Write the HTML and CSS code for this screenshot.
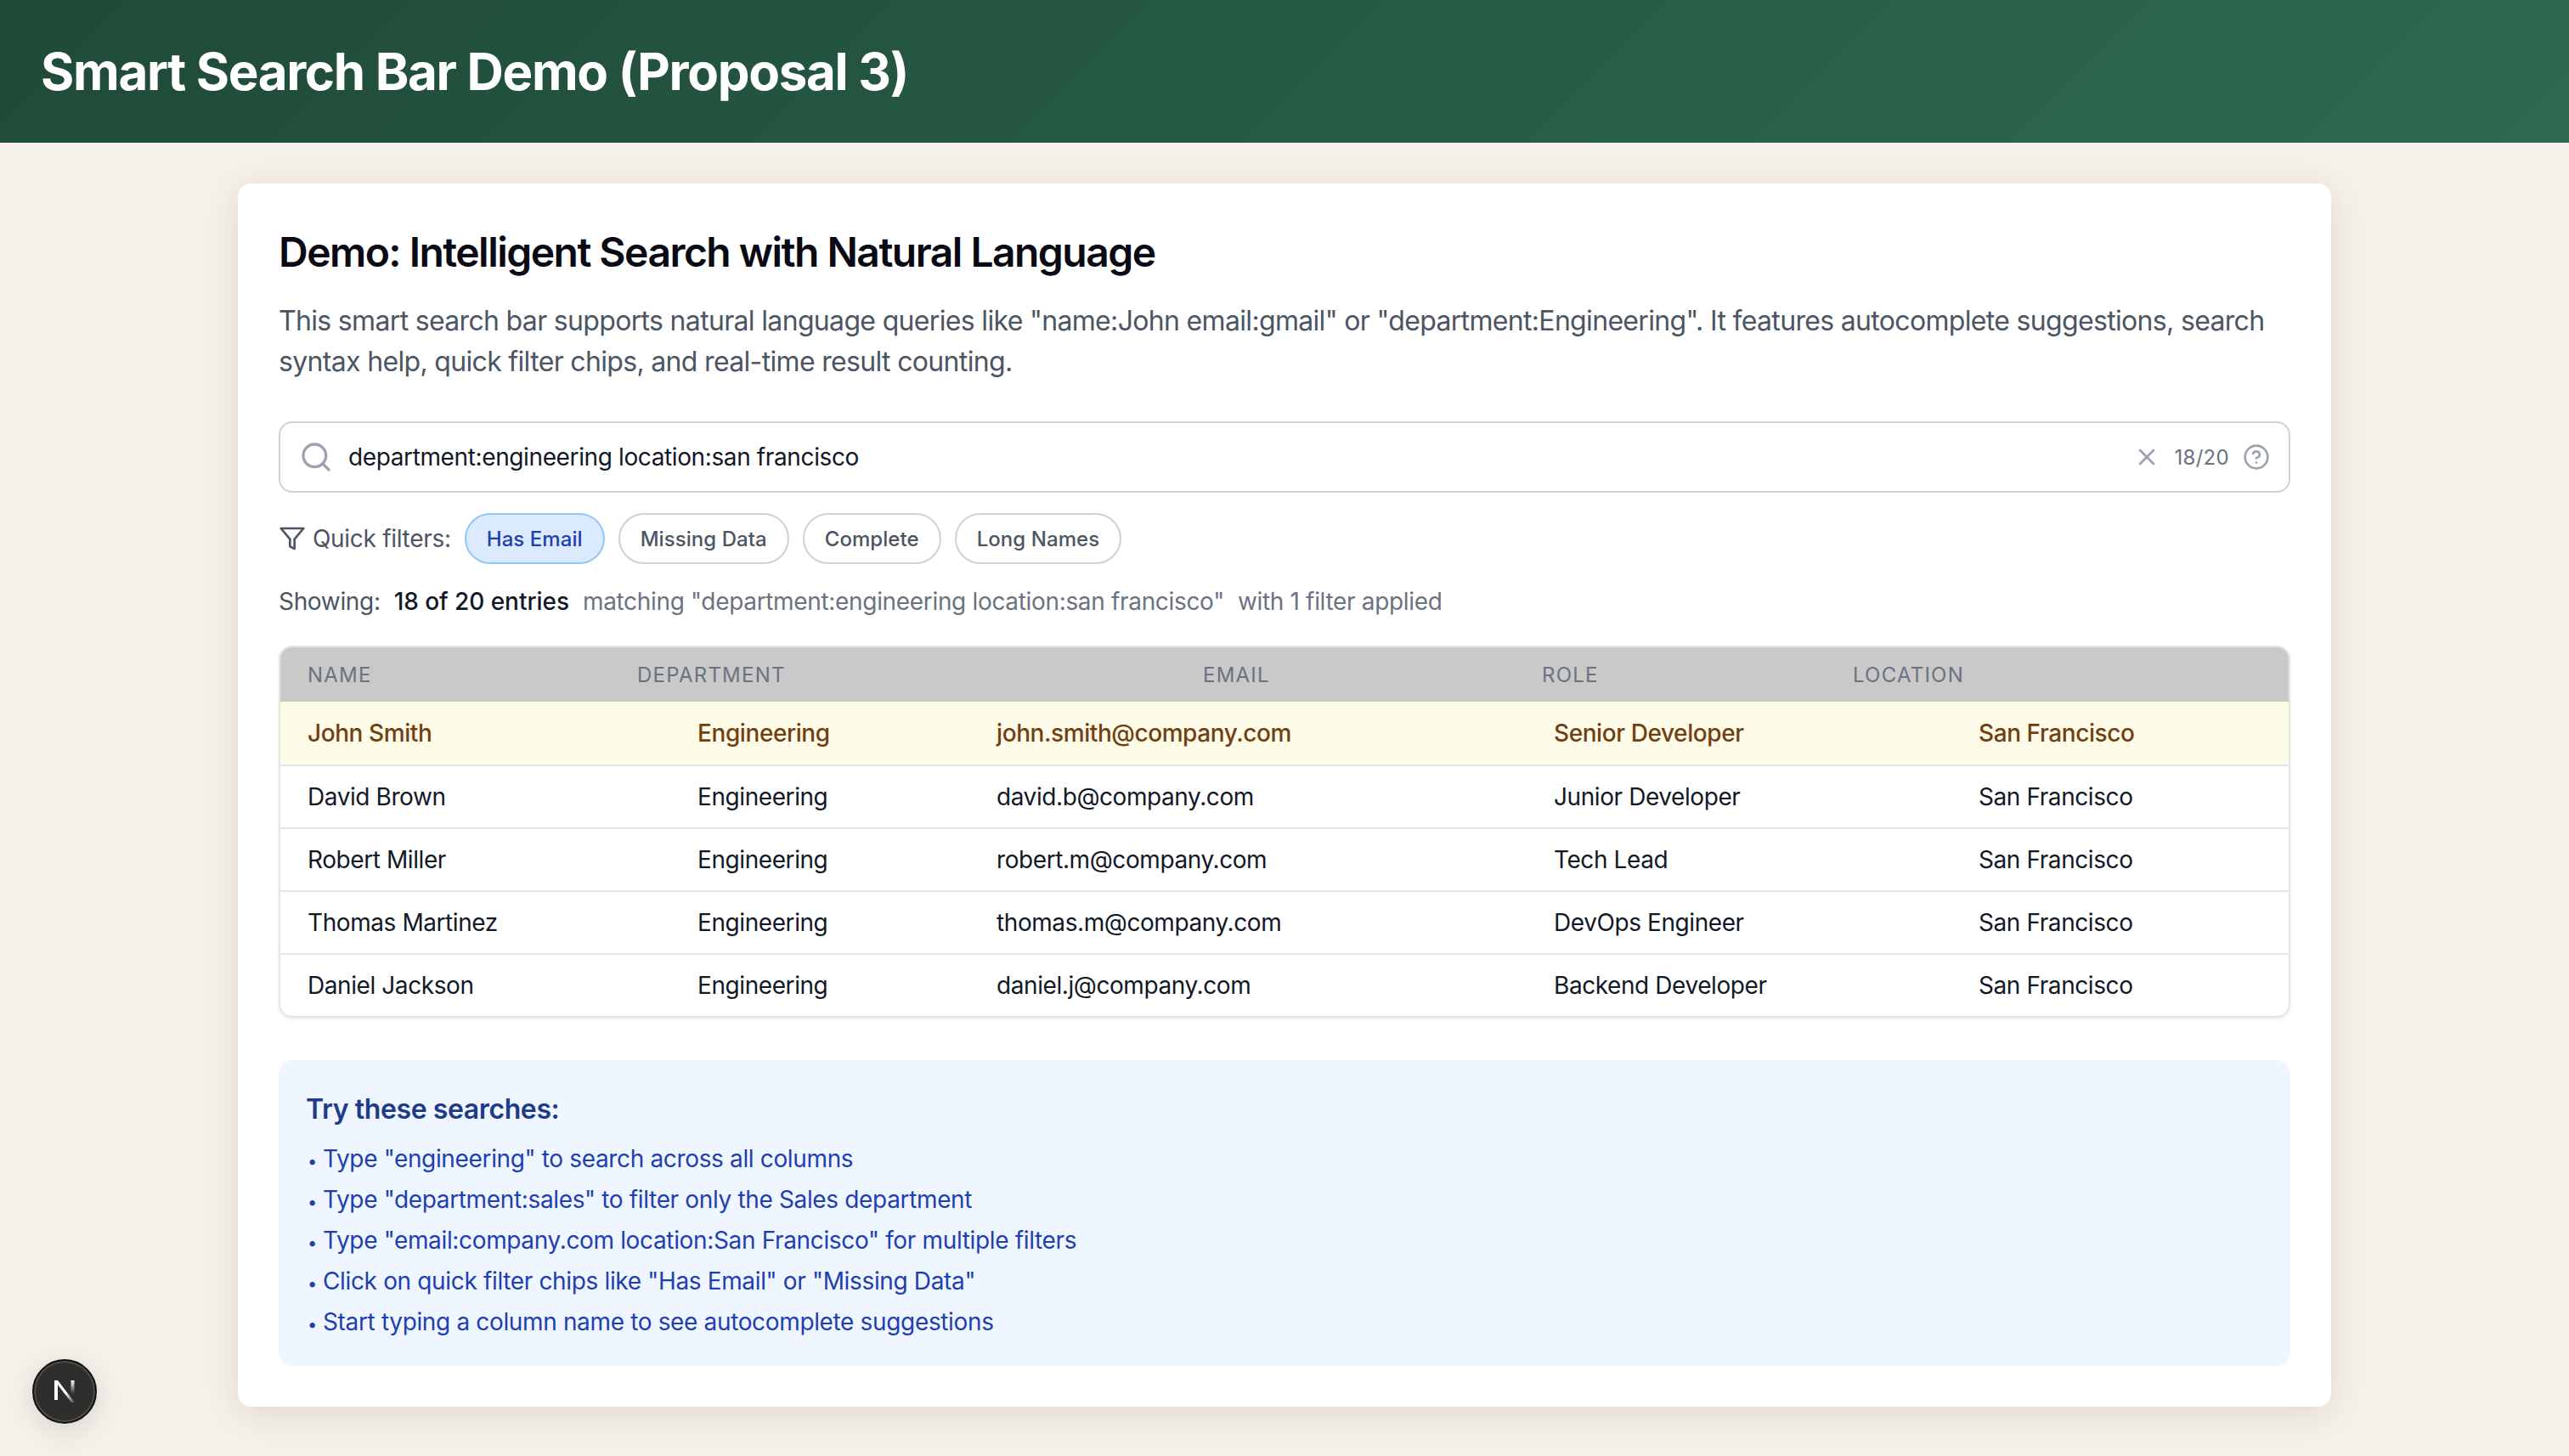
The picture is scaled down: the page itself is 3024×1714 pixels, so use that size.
FILE: index.html
```html
<!DOCTYPE html>
<html lang="en">
<head>
<meta charset="UTF-8">
<title>Smart Search Bar Demo (Proposal 3)</title>
<link rel="stylesheet" href="styles.css">
</head>
<body>

<header class="topbar">
  <h1>Smart Search Bar Demo (Proposal 3)</h1>
</header>

<main class="page">
  <section class="card">
    <h2>Demo: Intelligent Search with Natural Language</h2>
    <p class="intro">This smart search bar supports natural language queries like "name:John email:gmail" or "department:Engineering". It features autocomplete suggestions, search syntax help, quick filter chips, and real-time result counting.</p>

    <div class="search">
      <svg class="icon-search" viewBox="0 0 24 24" fill="none" stroke="currentColor" stroke-width="2" stroke-linecap="round" stroke-linejoin="round"><circle cx="11" cy="11" r="8"/><path d="m21 21-4.3-4.3"/></svg>
      <span class="search-text">department:engineering location:san francisco</span>
      <svg class="icon-clear" viewBox="0 0 24 24" fill="none" stroke="currentColor" stroke-width="2" stroke-linecap="round" stroke-linejoin="round"><path d="M18 6 6 18"/><path d="m6 6 12 12"/></svg>
      <span class="search-count">18/20</span>
      <svg class="icon-help" viewBox="0 0 24 24" fill="none" stroke="currentColor" stroke-width="2" stroke-linecap="round" stroke-linejoin="round"><circle cx="12" cy="12" r="10"/><path d="M9.09 9a3 3 0 0 1 5.83 1c0 2-3 3-3 3"/><path d="M12 17h.01"/></svg>
    </div>

    <div class="filters">
      <svg class="icon-filter" viewBox="0 0 24 24" fill="none" stroke="currentColor" stroke-width="2" stroke-linecap="round" stroke-linejoin="round"><polygon points="22 3 2 3 10 12.46 10 19 14 21 14 12.46 22 3"/></svg>
      <span class="filters-label">Quick filters:</span>
      <span class="chip active">Has Email</span>
      <span class="chip">Missing Data</span>
      <span class="chip">Complete</span>
      <span class="chip">Long Names</span>
    </div>

    <p class="summary">
      <span>Showing:</span>
      <strong>18 of 20 entries</strong>
      <span class="muted">matching "department:engineering location:san francisco"</span>
      <span class="muted">with 1 filter applied</span>
    </p>

    <div class="table">
      <div class="thead">
        <span>Name</span><span>Department</span><span>Email</span><span>Role</span><span>Location</span>
      </div>
      <div class="row highlight">
        <span>John Smith</span><span>Engineering</span><span>john.smith@company.com</span><span>Senior Developer</span><span>San Francisco</span>
      </div>
      <div class="row">
        <span>David Brown</span><span>Engineering</span><span>david.b@company.com</span><span>Junior Developer</span><span>San Francisco</span>
      </div>
      <div class="row">
        <span>Robert Miller</span><span>Engineering</span><span>robert.m@company.com</span><span>Tech Lead</span><span>San Francisco</span>
      </div>
      <div class="row">
        <span>Thomas Martinez</span><span>Engineering</span><span>thomas.m@company.com</span><span>DevOps Engineer</span><span>San Francisco</span>
      </div>
      <div class="row">
        <span>Daniel Jackson</span><span>Engineering</span><span>daniel.j@company.com</span><span>Backend Developer</span><span>San Francisco</span>
      </div>
    </div>

    <div class="tips">
      <h3>Try these searches:</h3>
      <ul>
        <li><span class="dot">•</span>Type "engineering" to search across all columns</li>
        <li><span class="dot">•</span>Type "department:sales" to filter only the Sales department</li>
        <li><span class="dot">•</span>Type "email:company.com location:San Francisco" for multiple filters</li>
        <li><span class="dot">•</span>Click on quick filter chips like "Has Email" or "Missing Data"</li>
        <li><span class="dot">•</span>Start typing a column name to see autocomplete suggestions</li>
      </ul>
    </div>
  </section>
</main>

<div class="dev-badge">
  <svg viewBox="0 0 24 26" fill="none">
    <defs>
      <linearGradient id="nFade" x1="0" y1="0" x2="0" y2="1">
        <stop offset="0" stop-color="#fff"/>
        <stop offset="1" stop-color="#fff" stop-opacity="0"/>
      </linearGradient>
      <linearGradient id="nDiag" x1="0" y1="0" x2="1" y2="1">
        <stop offset="0.55" stop-color="#fff"/>
        <stop offset="1" stop-color="#fff" stop-opacity="0.1"/>
      </linearGradient>
    </defs>
    <rect x="0" y="0" width="4" height="23" fill="#fff"/>
    <polygon points="0,0 4,0 24,26 20,26" fill="url(#nDiag)"/>
    <rect x="19.5" y="0" width="4" height="16" fill="url(#nFade)"/>
  </svg>
</div>

</body>
</html>
```

FILE: styles.css
```css
* {
  box-sizing: border-box;
}
html, body {
  margin: 0;
  padding: 0;
}
body {
  font-family: Inter, "Liberation Sans", sans-serif;
  background-color: #f5f1ea;
  color: #111827;
  min-height: 1714px;
}

.topbar {
  height: 168px;
  padding: 0 48px;
  display: flex;
  align-items: center;
  background: linear-gradient(135deg, #1f4a38 0%, #2d6a4f 100%);
}
.topbar h1 {
  margin: 0;
  font-size: 60px;
  font-weight: 700;
  line-height: 1;
  letter-spacing: -1.33px;
  color: #fff;
}

.page {
  padding: 48px 280px 58px;
}
.card {
  height: 1440px;
  padding: 48px;
  background-color: #fff;
  border-radius: 16px;
  box-shadow: 0 8px 40px rgba(60, 40, 20, 0.12);
}
.card h2 {
  margin: 0 0 24px;
  font-size: 48px;
  font-weight: 600;
  line-height: 66px;
  letter-spacing: -1.53px;
  color: #0a0a14;
}
.intro {
  margin: 0 0 46px;
  font-size: 32px;
  line-height: 48px;
  letter-spacing: -0.67px;
  color: #4b5563;
}

.search {
  height: 84px;
  padding: 0 24px 0 22px;
  display: flex;
  align-items: center;
  border: 2px solid #d1d1d1;
  border-radius: 16px;
  background-color: #fff;
}
.icon-search {
  width: 40px;
  height: 40px;
  color: #9ca3af;
  margin-right: 18px;
}
.search-text {
  flex: 1;
  font-size: 28px;
  letter-spacing: -0.38px;
  color: #111827;
}
.icon-clear {
  width: 32px;
  height: 32px;
  color: #9ca3af;
  margin-right: 16px;
}
.search-count {
  font-size: 24px;
  letter-spacing: 0.3px;
  color: #6b7280;
  margin-right: 16px;
}
.icon-help {
  width: 32px;
  height: 32px;
  color: #9ca3af;
  margin-right: -2px;
}

.filters {
  margin-top: 24px;
  display: flex;
  align-items: center;
}
.icon-filter {
  width: 32px;
  height: 32px;
  color: #4b5563;
  margin-right: 8px;
}
.filters-label {
  font-size: 28px;
  letter-spacing: -0.3px;
  color: #4b5563;
  margin-right: 16px;
}
.chip {
  height: 60px;
  padding: 0 24px;
  margin-right: 16px;
  display: flex;
  align-items: center;
  border: 2px solid #d1d1d1;
  border-radius: 30px;
  font-size: 24px;
  font-weight: 500;
  letter-spacing: 0.06px;
  color: #4b5563;
  background-color: #fff;
}
.chip.active {
  background-color: #dbeafe;
  border-color: #93c5fd;
  color: #1e40af;
}

.summary {
  margin: 24px 0 32px;
  display: flex;
  gap: 16px;
  font-size: 28px;
  line-height: 40px;
  letter-spacing: -0.33px;
  color: #4b5563;
}
.summary strong {
  font-weight: 500;
  letter-spacing: -0.05px;
  color: #111827;
}
.summary .muted {
  color: #6b7280;
}

.table {
  border: 2px solid #e5e5e5;
  border-radius: 16px;
  overflow: hidden;
  box-shadow: 0 2px 4px rgba(0, 0, 0, 0.08);
}
.thead, .row {
  padding-left: 32px;
  display: grid;
}
.thead {
  height: 64px;
  grid-template-columns: 388px 666px 399px 366px 1fr;
  align-items: center;
  background-color: #c9c9c9;
  font-size: 24px;
  font-weight: 400;
  letter-spacing: 1.22px;
  text-transform: uppercase;
  color: #6b7280;
}
.row {
  height: 74px;
  grid-template-columns: 459px 352px 656px 500px 1fr;
  align-items: center;
  font-size: 28px;
  letter-spacing: -0.42px;
  color: #111827;
  border-top: 2px solid #e5e5e5;
}
.thead + .row {
  border-top: 0;
}
.row.highlight {
  background-color: #fefce8;
  color: #713f12;
  font-weight: 500;
}

.tips {
  margin-top: 50px;
  padding: 32px;
  height: 360px;
  background-color: #eff6ff;
  border-radius: 16px;
}
.tips h3 {
  margin: 0 0 8px;
  font-size: 32px;
  font-weight: 600;
  line-height: 52px;
  letter-spacing: -0.4px;
  color: #1e3a8a;
}
.tips ul {
  margin: 0;
  padding: 0;
  list-style: none;
}
.tips li {
  font-size: 28px;
  line-height: 48px;
  letter-spacing: -0.35px;
  color: #1e40af;
}
.dot {
  display: inline-block;
  width: 20px;
  font-size: 20px;
  line-height: 1;
  padding-left: 2px;
}

.dev-badge {
  position: fixed;
  left: 38px;
  top: 1600px;
  width: 76px;
  height: 76px;
  display: flex;
  align-items: center;
  justify-content: center;
  border-radius: 50%;
  background-color: #2f2e2c;
  border: 2px solid #111;
  box-shadow: 0 8px 32px rgba(0, 0, 0, 0.12), inset 0 0 0 2px rgba(255, 255, 255, 0.15);
}
.dev-badge svg {
  width: 24px;
  height: 26px;
}
```
